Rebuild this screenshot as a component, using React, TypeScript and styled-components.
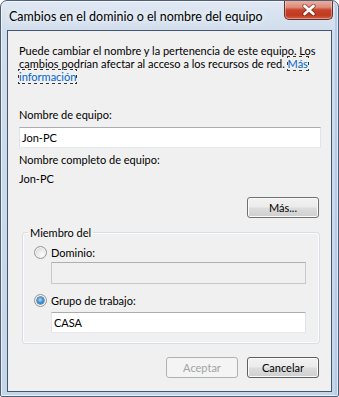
import React from "react";
import styled, { createGlobalStyle } from "styled-components";

const FONT = `Lato, "Liberation Sans", Arial, sans-serif`;

const Global = createGlobalStyle`
  html, body { margin: 0; padding: 0; background: #ffffff; }
  body { font-family: ${FONT}; }
  * { box-sizing: border-box; }
`;

const Frame = styled.div`
  width: 339px;
  height: 397px;
  border: 1px solid #4e5f75;
  border-radius: 7px 7px 2px 2px;
  background: linear-gradient(180deg, #dfe8f3 0px, #d0ddec 30px, #c4d6ea 100%);
  box-shadow: inset 0 0 0 1px rgba(255, 255, 255, 0.6), inset -3px 0 0 0 #b3cbe6;
  display: flex;
  flex-direction: column;
  overflow: hidden;
`;

const TitleBar = styled.div`
  height: 29px;
  flex: none;
  display: flex;
  align-items: flex-start;
`;

const Title = styled.div`
  font: 12.5px/14px ${FONT};
  color: #000;
  padding: 9px 0 0 8px;
  white-space: nowrap;
  text-shadow: 0 0 6px #ffffff, 0 0 10px rgba(255, 255, 255, 0.8);
`;

const CloseButton = styled.div`
  margin-left: auto;
  margin-right: 5px;
  margin-top: -1px;
  width: 49px;
  height: 20px;
  border: 1px solid #6a3128;
  border-top: none;
  border-radius: 0 0 5px 5px;
  background: linear-gradient(
    180deg,
    #ecb3a6 0%,
    #dd8d7b 38%,
    #c9432c 52%,
    #c03921 80%,
    #d2604a 100%
  );
  box-shadow: inset 0 0 0 1px rgba(255, 255, 255, 0.35);
  display: flex;
  align-items: center;
  justify-content: center;
`;

const Client = styled.div`
  flex: 1;
  margin: 0 6px 4px 6px;
  border: 1px solid #45566c;
  background: #f0f0f0;
  padding: 13px 10px 0 11px;
  display: flex;
  flex-direction: column;
  font: 11px/13px ${FONT};
  color: #000;
`;

const Intro = styled.p`
  margin: 0;
  white-space: nowrap;
`;

const Link = styled.span`
  color: #0066cc;
  outline: 1px dotted #333;
  outline-offset: 0;
`;

const Label = styled.div<{ $gap: number }>`
  margin-top: ${(p) => p.$gap}px;
  white-space: nowrap;
`;

const TextBox = styled.input<{ $gap: number; $h?: number }>`
  display: block;
  margin-top: ${(p) => p.$gap}px;
  height: ${(p) => p.$h ?? 21}px;
  width: 100%;
  border: 1px solid #e2e3ea;
  border-top-color: #abadb3;
  border-bottom-color: #e3e9ef;
  background: #ffffff;
  padding: 0 2px;
  font: 11px ${FONT};
  color: #000;
  outline: none;
  &:disabled {
    background: #f0f0f0;
    border-color: #c9c9c9;
    border-top-color: #afafaf;
  }
`;

const ButtonRow = styled.div<{ $gap: number }>`
  margin-top: ${(p) => p.$gap}px;
  margin-right: 2px;
  display: flex;
  justify-content: flex-end;
  gap: 9px;
`;

const Button = styled.button<{ $default?: boolean }>`
  width: 72px;
  height: 21px;
  padding: 0;
  border: 1px solid ${(p) => (p.$default ? "#5f5f5f" : "#707070")};
  border-radius: 3px;
  background: linear-gradient(180deg, #f2f2f2 0%, #ebebeb 48%, #dddddd 52%, #cfcfcf 100%);
  box-shadow: inset 0 0 0 1px #fbfbfb;
  font: 11px ${FONT};
  color: #000;
  &:disabled {
    border-color: #adb2b5;
    background: #f4f4f4;
    box-shadow: none;
    color: #a3a3a3;
  }
`;

const Group = styled.fieldset`
  margin: 8px 1px 0 3px;
  padding: 0 13px 10px 11px;
  border: 1px solid #d5dfe5;
  border-radius: 3px;
  box-shadow: inset 0 0 0 1px rgba(255, 255, 255, 0.7);
  min-width: 0;
`;

const Legend = styled.legend`
  margin-left: -6px;
  padding: 0 2px;
  font: 11px/13px ${FONT};
`;

const RadioRow = styled.label<{ $gap: number }>`
  margin-top: ${(p) => p.$gap}px;
  display: flex;
  align-items: center;
  gap: 4px;
  height: 13px;
  white-space: nowrap;
`;

const Radio = styled.span<{ $checked?: boolean }>`
  position: relative;
  flex: none;
  width: 13px;
  height: 13px;
  border-radius: 50%;
  border: 1px solid #969696;
  background: radial-gradient(circle at 65% 70%, #fdfdfd 0%, #e9e9e9 45%, #cfcfcf 100%);
  box-shadow: inset 0 0 0 1px #f4f4f4;
  &::after {
    content: "";
    display: ${(p) => (p.$checked ? "block" : "none")};
    position: absolute;
    left: 2px;
    top: 2px;
    width: 7px;
    height: 7px;
    border-radius: 50%;
    background: radial-gradient(circle at 45% 40%, #b6e0ff 0%, #4c9de0 40%, #1d5a8e 100%);
    box-shadow: 0 0 0 0.5px #174a75;
  }
`;

const Indented = styled.div`
  padding-left: 17px;
`;

function CloseGlyph() {
  return (
    <svg width="14" height="12" viewBox="0 0 14 12">
      <path
        d="M2.5 2 L11.5 10 M11.5 2 L2.5 10"
        fill="none"
        stroke="#4a1f18"
        strokeWidth="4.4"
        strokeLinecap="round"
        opacity="0.5"
      />
      <path
        d="M2.5 2 L11.5 10 M11.5 2 L2.5 10"
        fill="none"
        stroke="#ffffff"
        strokeWidth="2.6"
        strokeLinecap="round"
      />
    </svg>
  );
}

export default function App() {
  return (
    <>
      <Global />
      <Frame>
        <TitleBar>
          <Title>Cambios en el dominio o el nombre del equipo</Title>
          <CloseButton>
            <CloseGlyph />
          </CloseButton>
        </TitleBar>
        <Client>
          <Intro>
            Puede cambiar el nombre y la pertenencia de este equipo. Los
            <br />
            cambios podrían afectar al acceso a los recursos de red.{" "}
            <Link>
              Más
              <br />
              información
            </Link>
          </Intro>

          <Label $gap={25}>Nombre de equipo:</Label>
          <TextBox $gap={6} defaultValue="Jon-PC" readOnly />

          <Label $gap={5}>Nombre completo de equipo:</Label>
          <Label $gap={6}>Jon-PC</Label>

          <ButtonRow $gap={12}>
            <Button>Más...</Button>
          </ButtonRow>

          <Group>
            <Legend>Miembro del</Legend>
            <RadioRow $gap={7}>
              <Radio />
              Dominio:
            </RadioRow>
            <Indented>
              <TextBox $gap={3} $h={22} disabled />
            </Indented>
            <RadioRow $gap={10}>
              <Radio $checked />
              Grupo de trabajo:
            </RadioRow>
            <Indented>
              <TextBox $gap={5} defaultValue="CASA" readOnly />
            </Indented>
          </Group>

          <ButtonRow $gap={13}>
            <Button disabled>Aceptar</Button>
            <Button $default>Cancelar</Button>
          </ButtonRow>
        </Client>
      </Frame>
    </>
  );
}
